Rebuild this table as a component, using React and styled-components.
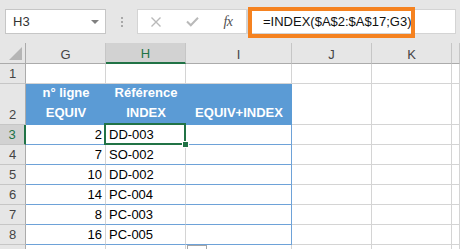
import React from 'react';
import styled, { createGlobalStyle, css } from 'styled-components';

const Global = createGlobalStyle`
  html, body { margin: 0; padding: 0; background: #ffffff; }
  body { font-family: "Liberation Sans", Arial, sans-serif; }
  #root { width: 460px; height: 249px; overflow: hidden; }
`;

const GREEN = '#217346';
const BLUE = '#5b9bd5';
const LINE_BLUE = '#6ea2d8';
const GRID = '#d4d4d4';
const HEAD_BG = '#e6e6e6';

const Page = styled.div`
  width: 460px;
  height: 249px;
  overflow: hidden;
  background: ${HEAD_BG};
  display: flex;
  flex-direction: column;
`;

const Toolbar = styled.div`
  height: 43px;
  flex: none;
  box-sizing: border-box;
  padding: 9px 4px 0 5px;
  display: flex;
  align-items: flex-start;
`;

const NameBox = styled.div`
  width: 101px;
  height: 25px;
  box-sizing: border-box;
  border: 1px solid #c6c6c6;
  background: #fff;
  display: flex;
  align-items: center;
  justify-content: space-between;
  padding: 0 6px 0 7px;
  font-size: 13px;
  color: #333;
`;

const DropArrow = styled.span`
  width: 0;
  height: 0;
  border-left: 4px solid transparent;
  border-right: 4px solid transparent;
  border-top: 4px solid #808080;
`;

const Grip = styled.div`
  width: 31px;
  height: 25px;
  display: flex;
  flex-direction: column;
  align-items: center;
  justify-content: center;
  gap: 2px;
`;

const Dot = styled.span`
  width: 2px;
  height: 2px;
  background: #a8a8a8;
`;

const FxBox = styled.div`
  width: 110px;
  height: 25px;
  box-sizing: border-box;
  border: 1px solid #d4d4d4;
  background: #fff;
  display: grid;
  grid-template-columns: repeat(3, 36px);
  align-items: center;
  justify-items: center;
`;

const FxLabel = styled.span`
  font-family: "Liberation Serif", "Times New Roman", serif;
  font-style: italic;
  font-size: 14px;
  color: #505050;
  letter-spacing: -0.5px;
`;

const FormulaBox = styled.div`
  flex: 1;
  height: 25px;
  box-sizing: border-box;
  border: 1px solid #d4d4d4;
  background: #fff;
  position: relative;
  display: flex;
  align-items: center;
  padding-left: 15px;
  font-size: 13px;
  color: #111;
`;

const Highlight = styled.span`
  position: absolute;
  left: 0;
  top: -3px;
  width: 167px;
  height: 31px;
  box-sizing: border-box;
  border: 4px solid #f58220;
  pointer-events: none;
`;

const Sheet = styled.div`
  flex: 1;
  position: relative;
  background: #fff;
  display: grid;
  grid-template-columns: 26px 80px 80px 106px 80px 80px 8px;
  grid-template-rows: 21px 20px 41px repeat(6, 20px) 20px;
`;

const base = css`
  box-sizing: border-box;
  display: flex;
  align-items: flex-end;
  font-size: 13px;
  line-height: 17px;
  white-space: nowrap;
  overflow: visible;
`;

const Corner = styled.div`
  ${base};
  background: ${HEAD_BG};
  border-right: 1px solid #ababab;
  border-bottom: 1px solid #ababab;
  position: relative;
`;

const CornerTri = styled.span`
  position: absolute;
  right: 3px;
  bottom: 3px;
  width: 0;
  height: 0;
  border-left: 13px solid transparent;
  border-bottom: 13px solid #b5b5b5;
`;

const ColHead = styled.div`
  ${base};
  justify-content: center;
  align-items: center;
  padding-top: 2px;
  color: ${(p) => (p.$active ? GREEN : '#444')};
  background: ${(p) => (p.$active ? '#d2d2d2' : HEAD_BG)};
  border-right: 1px solid #c6c6c6;
  border-bottom: ${(p) => (p.$active ? `2px solid ${GREEN}` : '1px solid #ababab')};
`;

const RowHead = styled.div`
  ${base};
  justify-content: center;
  padding-bottom: 1px;
  color: ${(p) => (p.$active ? GREEN : '#444')};
  background: ${(p) => (p.$active ? '#d2d2d2' : HEAD_BG)};
  border-bottom: 1px solid #c6c6c6;
  border-right: ${(p) => (p.$active ? `2px solid ${GREEN}` : '1px solid #ababab')};
`;

const Cell = styled.div`
  ${base};
  padding: 0 3px 1px 3px;
  justify-content: ${(p) => (p.$right ? 'flex-end' : 'flex-start')};
  color: #000;
  background: #fff;
  border-right: 1px solid ${(p) => p.$vline || GRID};
  border-bottom: 1px solid ${(p) => p.$hline || GRID};
  position: relative;
`;

const TitleCell = styled.div`
  ${base};
  flex-direction: column;
  align-items: center;
  justify-content: flex-end;
  padding-bottom: 1px;
  background: ${BLUE};
  color: #fff;
  font-weight: bold;
  line-height: 20px;
  border-bottom: 1px solid ${BLUE};
`;

const Selected = styled(Cell)`
  &::after {
    content: '';
    position: absolute;
    top: -2px;
    left: -2px;
    right: -1px;
    bottom: -1px;
    border: 2px solid ${GREEN};
    pointer-events: none;
  }
  &::before {
    content: '';
    position: absolute;
    right: -4px;
    bottom: -4px;
    width: 5px;
    height: 5px;
    background: ${GREEN};
    border: 1px solid #fff;
    z-index: 2;
  }
`;

const QuickBox = styled.span`
  position: absolute;
  left: 187px;
  top: 202px;
  width: 20px;
  height: 10px;
  box-sizing: border-box;
  border: 1px solid #a6a6a6;
  background: #fff;
`;

const cols = ['G', 'H', 'I', 'J', 'K', ''];

const data = [
  [2, 'DD-003'],
  [7, 'SO-002'],
  [10, 'DD-002'],
  [14, 'PC-004'],
  [8, 'PC-003'],
  [16, 'PC-005'],
];

const XIcon = () => (
  <svg width="12" height="12" viewBox="0 0 12 12">
    <path d="M1.5 1.5 L10.5 10.5 M10.5 1.5 L1.5 10.5" stroke="#b9b9b9" strokeWidth="1.4" fill="none" />
  </svg>
);

const CheckIcon = () => (
  <svg width="13" height="11" viewBox="0 0 13 11">
    <path d="M1 5.5 L4.8 9.3 L12 1.8" stroke="#b9b9b9" strokeWidth="2" fill="none" />
  </svg>
);

export default function App() {
  return (
    <>
      <Global />
      <Page>
        <Toolbar>
          <NameBox>
            H3
            <DropArrow />
          </NameBox>
          <Grip>
            <Dot />
            <Dot />
            <Dot />
          </Grip>
          <FxBox>
            <XIcon />
            <CheckIcon />
            <FxLabel>fx</FxLabel>
          </FxBox>
          <FormulaBox>
            =INDEX($A$2:$A$17;G3)
            <Highlight />
          </FormulaBox>
        </Toolbar>
        <Sheet>
          <Corner>
            <CornerTri />
          </Corner>
          {cols.map((c, i) => (
            <ColHead key={'h' + i} $active={c === 'H'}>
              {c}
            </ColHead>
          ))}

          <RowHead>1</RowHead>
          {cols.map((c, i) => (
            <Cell key={'r1' + i} />
          ))}

          <RowHead>2</RowHead>
          <TitleCell>
            <span>n° ligne</span>
            <span>EQUIV</span>
          </TitleCell>
          <TitleCell>
            <span>Référence</span>
            <span>INDEX</span>
          </TitleCell>
          <TitleCell>
            <span>EQUIV+INDEX</span>
          </TitleCell>
          <Cell />
          <Cell />
          <Cell />

          {data.map(([n, ref], r) => {
            const row = r + 3;
            const Ref = row === 3 ? Selected : Cell;
            return (
              <React.Fragment key={row}>
                <RowHead $active={row === 3}>{row}</RowHead>
                <Cell $right $hline={LINE_BLUE}>
                  {n}
                </Cell>
                <Ref $hline={LINE_BLUE}>{ref}</Ref>
                <Cell $hline={LINE_BLUE} $vline={LINE_BLUE} />
                <Cell />
                <Cell />
                <Cell />
              </React.Fragment>
            );
          })}

          <RowHead />
          {cols.map((c, i) => (
            <Cell key={'r9' + i} />
          ))}
          <QuickBox />
        </Sheet>
      </Page>
    </>
  );
}
